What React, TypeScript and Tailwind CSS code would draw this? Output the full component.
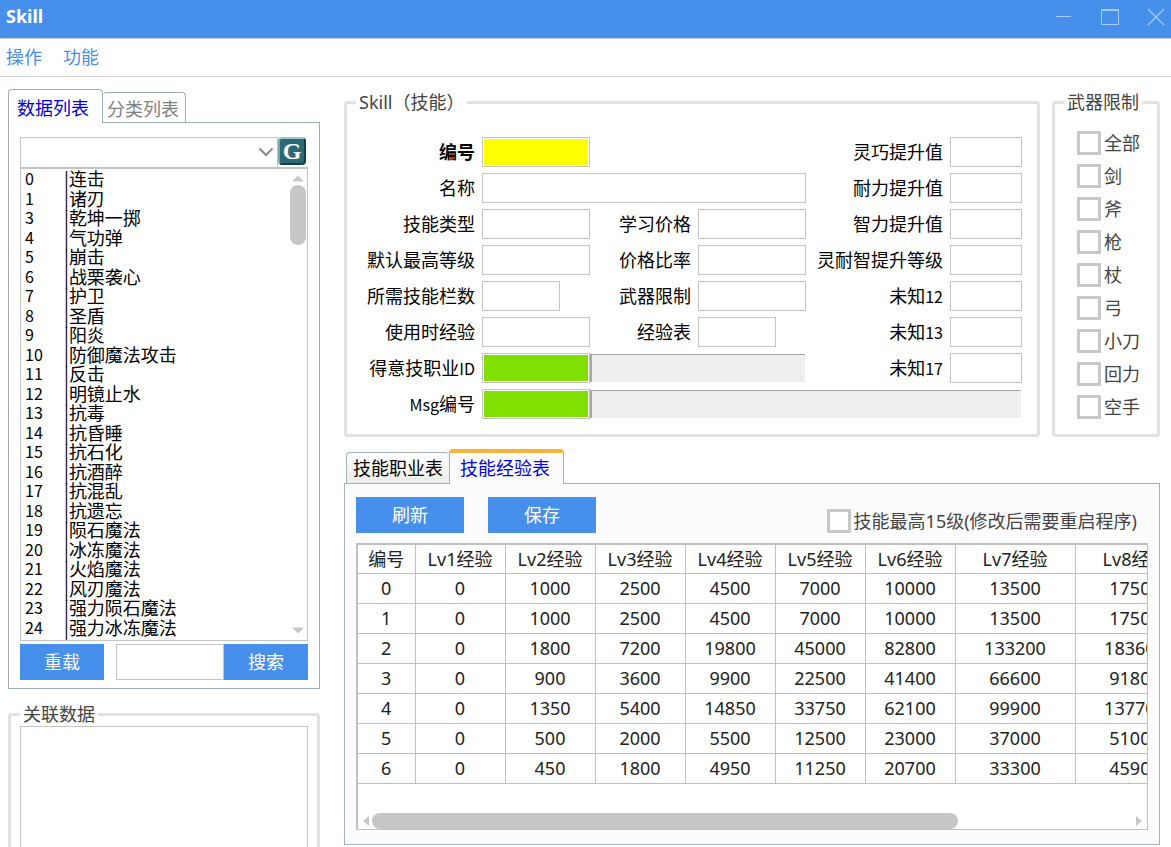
import { useState } from "react";

const skills: [number, string][] = [
    [0, "连击"],
    [1, "诸刃"],
    [3, "乾坤一掷"],
    [4, "气功弹"],
    [5, "崩击"],
    [6, "战栗袭心"],
    [7, "护卫"],
    [8, "圣盾"],
    [9, "阳炎"],
    [10, "防御魔法攻击"],
    [11, "反击"],
    [12, "明镜止水"],
    [13, "抗毒"],
    [14, "抗昏睡"],
    [15, "抗石化"],
    [16, "抗酒醉"],
    [17, "抗混乱"],
    [18, "抗遗忘"],
    [19, "陨石魔法"],
    [20, "冰冻魔法"],
    [21, "火焰魔法"],
    [22, "风刃魔法"],
    [23, "强力陨石魔法"],
    [24, "强力冰冻魔法"],
];

const weapons = ["全部", "剑", "斧", "枪", "杖", "弓", "小刀", "回力", "空手"];

const columns = ["编号", "Lv1经验", "Lv2经验", "Lv3经验", "Lv4经验", "Lv5经验", "Lv6经验", "Lv7经验", "Lv8经验"];

const expRows = [
    [0, 0, 1000, 2500, 4500, 7000, 10000, 13500, 17500],
    [1, 0, 1000, 2500, 4500, 7000, 10000, 13500, 17500],
    [2, 0, 1800, 7200, 19800, 45000, 82800, 133200, 183600],
    [3, 0, 900, 3600, 9900, 22500, 41400, 66600, 91800],
    [4, 0, 1350, 5400, 14850, 33750, 62100, 99900, 137700],
    [5, 0, 500, 2000, 5500, 12500, 23000, 37000, 51000],
    [6, 0, 450, 1800, 4950, 11250, 20700, 33300, 45900],
];

const inputClass = "h-[30px] min-w-0 border border-[#c4c4c4] px-1 outline-none";
const buttonClass = "h-9 bg-[#4690ec] text-lg leading-6 text-white";
const checkClass = "size-6 shrink-0 appearance-none border-3 border-[#c8c8c8] bg-white checked:bg-[#4690ec]";
const legendClass = "px-[3px] text-lg leading-5 text-[#444]";

function Latin({ children }: { children: React.ReactNode }) {
    return <span className="font-['Noto_Sans_CJK_SC',sans-serif] text-base leading-none">{children}</span>;
}

function Arrow({ d, className = "" }: { d: string; className?: string }) {
    return (
        <svg viewBox="0 0 12 12" className={`size-3 shrink-0 fill-[#c6c6c6] ${className}`} aria-hidden="true">
            <path d={d} />
        </svg>
    );
}

type FieldProps = {
    id: string;
    label: React.ReactNode;
    labelClass?: string;
    className?: string;
};

function Field({ id, label, labelClass = "", className = "" }: FieldProps) {
    return (
        <>
            <label htmlFor={id} className={`whitespace-nowrap pr-[7px] text-right ${labelClass}`}>{label}</label>
            <input id={id} name={id} type="text" className={`${inputClass} ${className}`} />
        </>
    );
}

function TitleBar() {
    return (
        <header className="flex h-[38px] shrink-0 items-center justify-between bg-[#4690ec] pl-[6px] pr-[6px] text-white">
            <h1 className="pb-[6px] text-lg font-bold leading-6">Skill</h1>
            <div className="flex gap-7 pb-1">
                <button type="button" aria-label="Minimize">
                    <svg viewBox="0 0 18 18" className="size-[18px] fill-none stroke-[#a4cbf9]"><path d="M1 8.500h15" /></svg>
                </button>
                <button type="button" aria-label="Maximize">
                    <svg viewBox="0 0 18 18" className="size-[18px] fill-none stroke-[#a4cbf9]"><path d="M0.500 1.500h17v15h-17zM0.500 2.500h17" /></svg>
                </button>
                <button type="button" aria-label="Close">
                    <svg viewBox="0 0 18 18" className="size-[18px] fill-none stroke-[#a4cbf9] stroke-[1.3]"><path d="M1 1l16 16M17 1L1 17" /></svg>
                </button>
            </div>
        </header>
    );
}

function SkillList() {
    return (
        <section>
            <div role="tablist" className="flex items-end">
                <button type="button" role="tab" aria-selected="true" className="z-10 -mb-px h-[34px] rounded-t border border-b-0 border-[#9aaebb] bg-white pl-2 pr-[13px] pt-[2px] text-lg leading-6 text-[#0000e0]">
                    数据列表
                </button>
                <button type="button" role="tab" aria-selected="false" className="h-[30px] rounded-t border border-b-0 border-l-0 border-[#9aaebb] bg-white pl-1 pr-[6px] pt-[2px] text-lg leading-6 text-[#808080]">
                    分类列表
                </button>
            </div>
            <div className="border border-[#9aaebb] px-[11px] pb-2 pt-[14px]">
                <div className="flex">
                    <div className="relative flex-1">
                        <select aria-label="类别" className="h-[30px] w-full appearance-none border border-b-0 border-[#c4c4c4] bg-white" />
                        <svg viewBox="0 0 16 16" className="pointer-events-none absolute right-1 top-2 size-4 fill-none stroke-[#8a8a8a] stroke-2">
                            <path d="M1.500 3.500L8 10l6.500-6.500" />
                        </svg>
                    </div>
                    <button type="button" className="mr-[2px] size-7 rounded border-2 border-b-[#17404a] border-l-[#7ba5ab] border-r-[#17404a] border-t-[#a3c3c7] bg-[#2b6974] text-center font-['Liberation_Serif',serif] text-2xl font-bold leading-6 text-white">
                        G
                    </button>
                </div>
                <div className="flex h-[474px] border border-t-2 border-[#c4c4c4] bg-white">
                    <ul role="listbox" aria-label="数据列表" className="grid flex-1 auto-rows-fr pb-[3px] pl-1 font-['Noto_Sans_CJK_SC',sans-serif] text-lg leading-[19px] text-black">
                        {skills.map(([id, name]) => (
                            <li key={id} role="option" aria-selected="false" className="flex min-h-0 items-center whitespace-nowrap">
                                <span className="w-[39px] text-base leading-[19px]">{id}</span>
                                <span>|{name}</span>
                            </li>
                        ))}
                    </ul>
                    <div className="flex w-[18px] flex-col items-center py-1">
                        <Arrow d="M0 8.500L6 2.500l6 6z" />
                        <div className="h-[60px] w-4 rounded-full bg-[#c6c6c6]" />
                        <Arrow d="M0 3.500h12l-6 6z" className="mt-auto" />
                    </div>
                </div>
                <div className="mt-[3px] flex">
                    <button type="button" className={`${buttonClass} w-21`}>重载</button>
                    <input type="text" aria-label="搜索" className="ml-3 h-9 min-w-0 flex-1 border border-[#c4c4c4] bg-white px-1 outline-none" />
                    <button type="button" className={`${buttonClass} w-21`}>搜索</button>
                </div>
            </div>
        </section>
    );
}

function SkillForm() {
    return (
        <fieldset className="min-w-0 flex-1 rounded border-3 border-[#e2e2e2] pb-[15px] pl-[13px] pr-[15px] pt-[25px]">
            <legend className={`${legendClass} ml-[-4px]`}>Skill（技能）</legend>
            <div className="grid grid-cols-[122fr_108fr_108fr_108fr_144fr_72fr] items-center gap-y-[6px] text-lg leading-6 text-black">
                <Field id="no" label="编号" labelClass="font-bold" className="bg-[#ffff00] ring-1 ring-inset ring-white" />
                <div className="col-span-2" />
                <Field id="dex" label="灵巧提升值" />

                <Field id="name" label="名称" className="col-span-3" />
                <Field id="sta" label="耐力提升值" />

                <Field id="type" label="技能类型" />
                <Field id="price" label="学习价格" />
                <Field id="int" label="智力提升值" />

                <Field id="maxLevel" label="默认最高等级" />
                <Field id="priceRate" label="价格比率" />
                <Field id="upLevel" label="灵耐智提升等级" />

                <Field id="slots" label="所需技能栏数" className="w-[78px]" />
                <Field id="weapon" label="武器限制" />
                <Field id="unknown12" label={<>未知<Latin>12</Latin></>} />

                <Field id="useExp" label="使用时经验" />
                <Field id="expTable" label="经验表" className="w-[78px]" />
                <Field id="unknown13" label={<>未知<Latin>13</Latin></>} />

                <Field id="jobId" label={<>得意技职业<Latin>ID</Latin></>} className="bg-[#80e000] ring-1 ring-inset ring-white" />
                <output htmlFor="jobId" className="col-span-2 mr-px h-7 border-l-2 border-t border-[#a8a8a8] bg-[#eeeeee]" />
                <Field id="unknown17" label={<>未知<Latin>17</Latin></>} />

                <Field id="msgId" label={<><Latin>Msg</Latin>编号</>} className="bg-[#80e000] ring-1 ring-inset ring-white" />
                <output htmlFor="msgId" className="col-span-4 mr-px h-7 border-l-2 border-t border-[#a8a8a8] bg-[#eeeeee]" />
            </div>
        </fieldset>
    );
}

function WeaponLimit() {
    return (
        <fieldset className="w-27 shrink-0 rounded border-3 border-[#e2e2e2] pl-[22px] pt-[19px]">
            <legend className={`${legendClass} ml-[-13px]`}>武器限制</legend>
            <div className="flex flex-col gap-[9px] text-lg leading-6 text-[#444]">
                {weapons.map((name) => (
                    <label key={name} className="flex items-center gap-[3px] whitespace-nowrap">
                        <input type="checkbox" className={checkClass} />
                        {name}
                    </label>
                ))}
            </div>
        </fieldset>
    );
}

function ExpTable() {
    return (
        <div className="mt-[10px] flex h-[287px] flex-col border border-l-2 border-t-2 border-[#c0c0c0] bg-white">
            <div className="overflow-hidden">
                <table className="w-[837px] table-fixed border-collapse text-center text-lg leading-6 text-[#222]">
                    <colgroup>
                        {columns.map((name, i) => (
                            <col key={name} className={i === 0 ? "w-[57px]" : i < 7 ? "w-[90px]" : "w-[120px]"} />
                        ))}
                    </colgroup>
                    <thead>
                        <tr className="h-7">
                            {columns.map((name) => (
                                <th key={name} className="border-b border-r border-[#c0c0c0] p-0 font-normal">{name}</th>
                            ))}
                        </tr>
                    </thead>
                    <tbody>
                        {expRows.map((row) => (
                            <tr key={row[0]} className="h-[30px]">
                                {row.map((value, i) => (
                                    <td key={i} className="border-b border-r border-[#c0c0c0] p-0">{value}</td>
                                ))}
                            </tr>
                        ))}
                    </tbody>
                </table>
            </div>
            <div className="mt-auto flex items-center px-[2px]">
                <Arrow d="M9 1v10L3 6z" />
                <div className="flex-1">
                    <div className="h-4 w-[77%] rounded-full bg-[#c6c6c6]" />
                </div>
                <Arrow d="M3 1v10l6-5z" />
            </div>
        </div>
    );
}

export default function App() {
    const [maxLevel, setMaxLevel] = useState(false);

    return (
        <div className="flex h-screen flex-col overflow-hidden bg-white font-['Noto_Sans','Noto_Sans_CJK_SC',sans-serif]">
            <TitleBar />
            <nav className="flex h-[39px] shrink-0 items-center gap-[21px] border-y border-[#cfcfcf] pb-[2px] pl-[6px] text-lg leading-6 text-[#4690ec]">
                <button type="button">操作</button>
                <button type="button">功能</button>
            </nav>
            <main className="flex gap-6 pl-2 pr-[11px]">
                <div className="w-78 shrink-0 pt-3">
                    <SkillList />
                    <fieldset className="mt-[15px] min-w-0 rounded border-3 border-[#e2e2e2] px-[9px] pb-[9px] pt-[2px]">
                        <legend className={legendClass}>关联数据</legend>
                        <ul role="listbox" aria-label="关联数据" className="h-40 border border-[#c4c4c4]" />
                    </fieldset>
                </div>
                <div className="flex min-w-0 flex-1 flex-col pt-[15px]">
                    <div className="flex gap-3">
                        <SkillForm />
                        <WeaponLimit />
                    </div>
                    <div role="tablist" className="mt-3 flex items-end pl-[2px]">
                        <button type="button" role="tab" aria-selected="false" className="h-[31px] whitespace-nowrap rounded-t border border-b-0 border-r-0 border-[#9fb3b8] bg-linear-to-b from-white to-[#ebebe8] px-[6px] text-lg leading-6 text-black">
                            技能职业表
                        </button>
                        <button type="button" role="tab" aria-selected="true" className="z-10 -mb-px h-[35px] whitespace-nowrap rounded-t border border-b-0 border-t-4 border-[#9fb3b8] border-t-[#f5b43c] bg-[#fcfcff] pb-[2px] pl-[10px] pr-[13px] text-lg leading-6 text-[#0000e0]">
                            技能经验表
                        </button>
                    </div>
                    <section className="border border-[#9fb3b8] bg-[#fcfcff] px-[11px] pb-[14px] pt-[13px]">
                        <div className="flex">
                            <button type="button" className={`${buttonClass} w-27`}>刷新</button>
                            <button type="button" className={`${buttonClass} ml-6 w-27`}>保存</button>
                            <label className="ml-auto mr-[11px] flex items-center gap-[3px] self-end whitespace-nowrap text-lg leading-6 text-[#444]">
                                <input type="checkbox" className={checkClass} checked={maxLevel} onChange={(e) => setMaxLevel(e.target.checked)} />
                                技能最高15级(修改后需要重启程序)
                            </label>
                        </div>
                        <ExpTable />
                    </section>
                </div>
            </main>
        </div>
    );
}
